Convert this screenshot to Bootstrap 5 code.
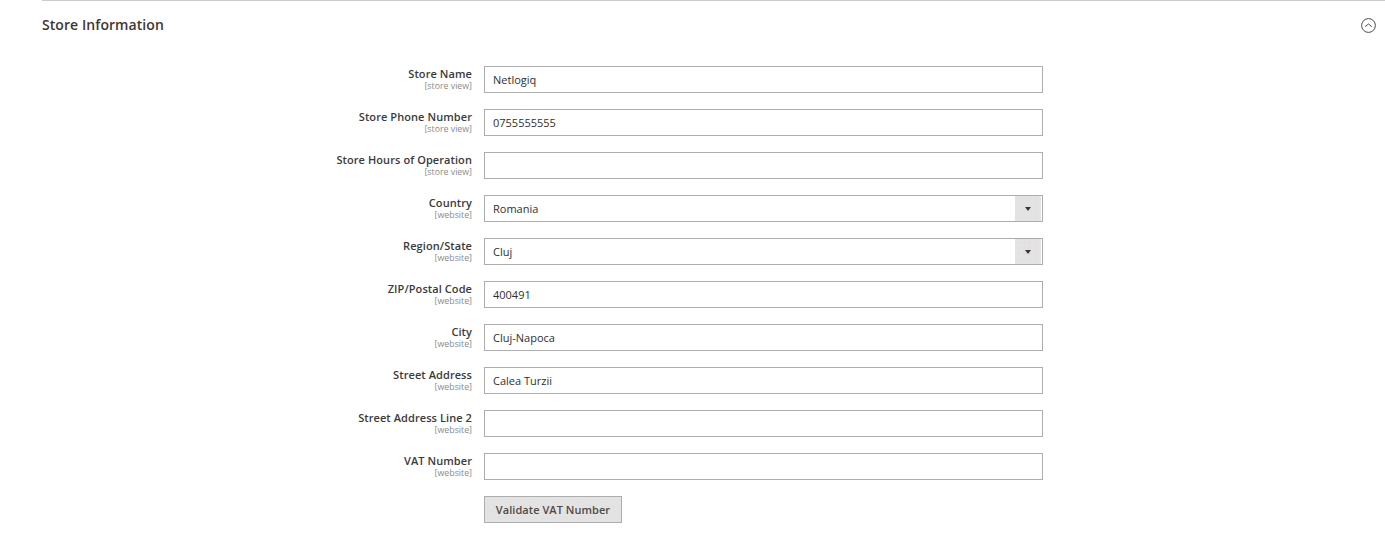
<!DOCTYPE html>
<html lang="en">
<head>
<meta charset="utf-8">
<title>Store Information</title>
<link rel="stylesheet" href="https://cdn.jsdelivr.net/npm/bootstrap@5.3.0/dist/css/bootstrap.min.css">
<style>
html, body { height: 540px; overflow: hidden; }
body { background: #fff; font-family: "Open Sans", "Liberation Sans", sans-serif; color: #303030; }
.sheet { margin-left: 42px; }
.section-head { border-top: 1px solid #cccccc; height: 66px; padding-top: 14px; }
.section-title { font-size: 14px; font-weight: 600; line-height: 19px; letter-spacing: .07px; margin: 0; color: #41362f; }
.toggle-wrap { margin-right: 9.5px; margin-top: 3px; line-height: 0; }
.field-row { height: 27px; margin-bottom: 16px; }
.field-label { width: 430px; margin-right: 12px; text-align: right; }
.field-name { display: block; font-size: 11px; font-weight: 600; line-height: 15px; letter-spacing: .08px; margin-bottom: 0; color: #3a3a3a; }
.field-scope { display: block; font-size: 8.8px; line-height: 10px; color: #8a8a8a; }
.field-box.form-control, .field-box.form-select { width: 559px; height: 27px; min-height: 0; border-radius: 0; border: 1px solid #adadad; font-size: 11px; line-height: 15px; padding: 0 8px; color: #303030; box-shadow: none; background-image: none; }
.select-wrap { width: 559px; height: 27px; }
.select-arrow { position: absolute; right: 2px; top: 1px; width: 26px; height: 25px; pointer-events: none; background-color: #e3e3e3; background-image: radial-gradient(circle, #dadada .6px, transparent .8px); background-size: 6px 6px; }
.select-arrow::after { content: ""; position: absolute; left: 10px; top: 11px; width: 0; height: 0; border-left: 3.5px solid transparent; border-right: 3.5px solid transparent; border-top: 4.5px solid #41362f; }
.validate-btn.btn { width: 138px; height: 27px; padding: 0; font-size: 11px; font-weight: 600; line-height: 15px; letter-spacing: .05px; border-radius: 0; background-color: #e3e3e3; background-image: radial-gradient(circle, #dcdcdc .6px, transparent .8px); background-size: 6px 6px; border: 1px solid #adadad; color: #514943; }
</style>
</head>
<body>
<div class="sheet">
  <div class="section-head d-flex justify-content-between align-items-start">
    <h2 class="section-title">Store Information</h2>
    <div class="toggle-wrap">
      <svg width="15" height="15" viewBox="0 0 15 15" aria-hidden="true"><circle cx="7.5" cy="7.5" r="6.9" fill="none" stroke="#514943" stroke-width="1"/><path d="M4.2 8.6 7.5 6l3.3 2.6" fill="none" stroke="#514943" stroke-width="1"/></svg>
    </div>
  </div>

  <div class="d-flex field-row">
    <div class="field-label"><label class="field-name" for="f1">Store Name</label><span class="field-scope">[store view]</span></div>
    <input id="f1" class="form-control field-box" value="Netlogiq">
  </div>
  <div class="d-flex field-row">
    <div class="field-label"><label class="field-name" for="f2">Store Phone Number</label><span class="field-scope">[store view]</span></div>
    <input id="f2" class="form-control field-box" value="0755555555">
  </div>
  <div class="d-flex field-row">
    <div class="field-label"><label class="field-name" for="f3">Store Hours of Operation</label><span class="field-scope">[store view]</span></div>
    <input id="f3" class="form-control field-box" value="">
  </div>
  <div class="d-flex field-row">
    <div class="field-label"><label class="field-name" for="f4">Country</label><span class="field-scope">[website]</span></div>
    <div class="select-wrap position-relative">
      <select id="f4" class="form-select field-box"><option>Romania</option></select>
      <span class="select-arrow"></span>
    </div>
  </div>
  <div class="d-flex field-row">
    <div class="field-label"><label class="field-name" for="f5">Region/State</label><span class="field-scope">[website]</span></div>
    <div class="select-wrap position-relative">
      <select id="f5" class="form-select field-box"><option>Cluj</option></select>
      <span class="select-arrow"></span>
    </div>
  </div>
  <div class="d-flex field-row">
    <div class="field-label"><label class="field-name" for="f6">ZIP/Postal Code</label><span class="field-scope">[website]</span></div>
    <input id="f6" class="form-control field-box" value="400491">
  </div>
  <div class="d-flex field-row">
    <div class="field-label"><label class="field-name" for="f7">City</label><span class="field-scope">[website]</span></div>
    <input id="f7" class="form-control field-box" value="Cluj-Napoca">
  </div>
  <div class="d-flex field-row">
    <div class="field-label"><label class="field-name" for="f8">Street Address</label><span class="field-scope">[website]</span></div>
    <input id="f8" class="form-control field-box" value="Calea Turzii">
  </div>
  <div class="d-flex field-row">
    <div class="field-label"><label class="field-name" for="f9">Street Address Line 2</label><span class="field-scope">[website]</span></div>
    <input id="f9" class="form-control field-box" value="">
  </div>
  <div class="d-flex field-row">
    <div class="field-label"><label class="field-name" for="f10">VAT Number</label><span class="field-scope">[website]</span></div>
    <input id="f10" class="form-control field-box" value="">
  </div>
  <div class="d-flex field-row">
    <div class="field-label"></div>
    <button type="button" class="btn validate-btn">Validate VAT Number</button>
  </div>
</div>
<script src="https://cdn.jsdelivr.net/npm/bootstrap@5.3.0/dist/js/bootstrap.bundle.min.js"></script>
</body>
</html>
